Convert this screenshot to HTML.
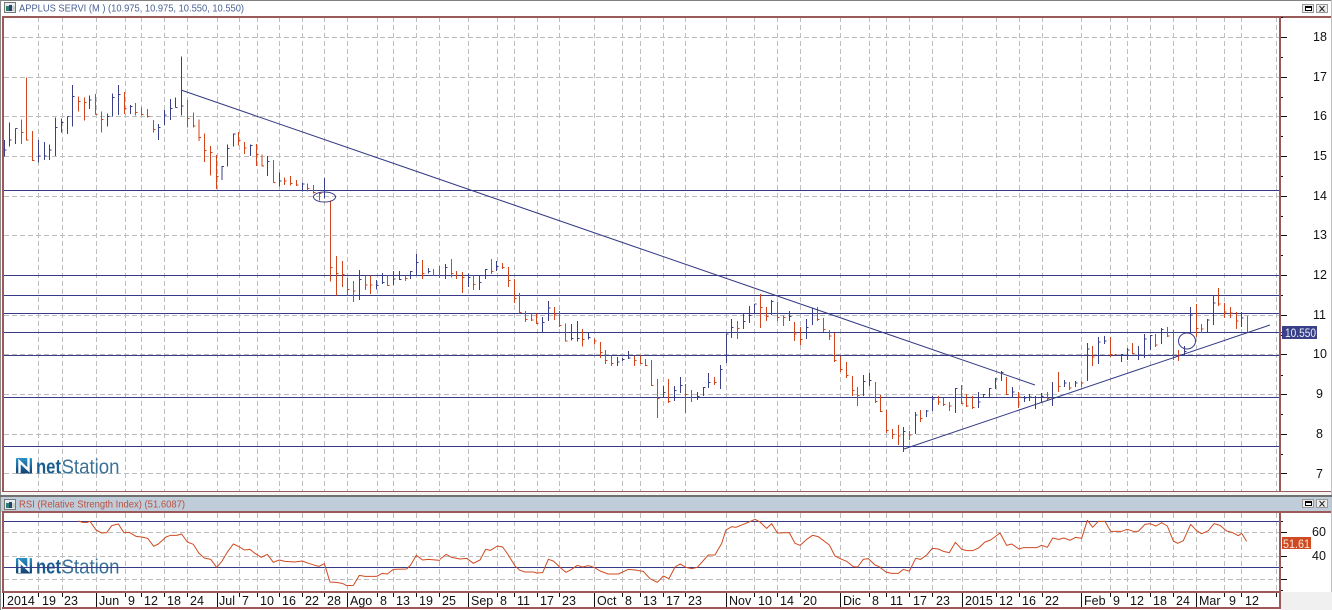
<!DOCTYPE html>
<html><head><meta charset="utf-8"><style>
html,body{margin:0;padding:0;background:#fff;width:1332px;height:610px;overflow:hidden}
svg{display:block}
text{font-family:"Liberation Sans",sans-serif}
.d text{font-size:12.5px;fill:#111}
.s text{font-size:12.5px;fill:#111}
.b{fill:none;stroke:#3a4088;stroke-width:3;shape-rendering:crispEdges}
.r{fill:none;stroke:#d2441a;stroke-width:3;shape-rendering:crispEdges}
.l{fill:none;stroke:#353b86;stroke-width:1;shape-rendering:crispEdges}
.t{fill:none;stroke:#353b86;stroke-width:1}
</style></head><body>
<svg width="1332" height="610" viewBox="0 0 1332 610" xmlns="http://www.w3.org/2000/svg">
<defs><linearGradient id="g" x1="0" y1="0" x2="0" y2="1"><stop offset="0" stop-color="#2a93c8"/><stop offset="1" stop-color="#123f70"/></linearGradient></defs>
<rect width="1332" height="610" fill="#fff"/>
<!-- window frame -->
<rect x="0" y="0" width="1332" height="1" fill="#808080"/>
<rect x="0" y="0" width="1" height="610" fill="#8a8a8a"/>
<rect x="1331" y="0" width="1" height="592" fill="#c0c0c0"/>
<!-- vertical grid -->
<g stroke="#bdbdbd" stroke-width="1" stroke-dasharray="5 3" shape-rendering="crispEdges">
<path d="M38.5 17V491M62.5 17V491M96.5 17V491M125.5 17V491M141.5 17V491M164.5 17V491M187.5 17V491M217.5 17V491M239.5 17V491M257.5 17V491M279.5 17V491M302.5 17V491M324.5 17V491M347.5 17V491M377.5 17V491M393.5 17V491M416.5 17V491M439.5 17V491M468.5 17V491M497.5 17V491M514.5 17V491M537.5 17V491M559.5 17V491M594.5 17V491M622.5 17V491M640.5 17V491M663.5 17V491M685.5 17V491M726.5 17V491M754.5 17V491M777.5 17V491M800.5 17V491M840.5 17V491M869.5 17V491M886.5 17V491M909.5 17V491M932.5 17V491M962.5 17V491M996.5 17V491M1019.5 17V491M1042.5 17V491M1081.5 17V491M1110.5 17V491M1127.5 17V491M1150.5 17V491M1173.5 17V491M1196.5 17V491M1224.5 17V491M1241.5 17V491M1276.5 17V491"/>
<path d="M38.5 513V591M62.5 513V591M96.5 513V591M125.5 513V591M141.5 513V591M164.5 513V591M187.5 513V591M217.5 513V591M239.5 513V591M257.5 513V591M279.5 513V591M302.5 513V591M324.5 513V591M347.5 513V591M377.5 513V591M393.5 513V591M416.5 513V591M439.5 513V591M468.5 513V591M497.5 513V591M514.5 513V591M537.5 513V591M559.5 513V591M594.5 513V591M622.5 513V591M640.5 513V591M663.5 513V591M685.5 513V591M726.5 513V591M754.5 513V591M777.5 513V591M800.5 513V591M840.5 513V591M869.5 513V591M886.5 513V591M909.5 513V591M932.5 513V591M962.5 513V591M996.5 513V591M1019.5 513V591M1042.5 513V591M1081.5 513V591M1110.5 513V591M1127.5 513V591M1150.5 513V591M1173.5 513V591M1196.5 513V591M1224.5 513V591M1241.5 513V591M1276.5 513V591"/>
<path d="M4 37.5H1279M4 77.5H1279M4 116.5H1279M4 156.5H1279M4 196.5H1279M4 235.5H1279M4 275.5H1279M4 315.5H1279M4 354.5H1279M4 394.5H1279M4 434.5H1279M4 473.5H1279M4 532.5H1279M4 556.5H1279M4 579.5H1279"/>
</g>
<!-- logos -->
<g>
<rect x="16" y="458" width="16" height="15.5" rx="1" fill="url(#g)"/>
<path d="M19.5 473V461.5L28.5 470V458" fill="none" stroke="#fff" stroke-width="2.4"/>
<text x="36" y="473.5" font-size="20.5" font-weight="bold" fill="#1b5d8e" textLength="25" lengthAdjust="spacingAndGlyphs">net</text>
<text x="61.5" y="473.5" font-size="20.5" fill="#3a7299" textLength="58" lengthAdjust="spacingAndGlyphs">Station</text>
</g>
<g>
<rect x="16" y="558" width="16" height="15.5" rx="1" fill="url(#g)"/>
<path d="M19.5 573V561.5L28.5 570V558" fill="none" stroke="#fff" stroke-width="2.4"/>
<text x="36" y="573.5" font-size="20.5" font-weight="bold" fill="#1b5d8e" textLength="25" lengthAdjust="spacingAndGlyphs">net</text>
<text x="61.5" y="573.5" font-size="20.5" fill="#3a7299" textLength="58" lengthAdjust="spacingAndGlyphs">Station</text>
</g>
<!-- horizontal lines -->
<path class="l" d="M3 190.5H1279M3 275.5H1279M3 295.5H1279M3 313.5H1279M3 332.5H1282M3 355.5H1279M3 397.5H1279M3 446.5H1279M3 521.5H1279M3 567.5H1279"/>
<!-- bars group 1 -->
<g transform="scale(.33333)">
<path class="b" d="M13 420V470M13 450h6M28 367V440M28 420h6M47 385V432M47 385h6M115 420V488M115 468h6M133 426V480M133 468h6M148 433V480M148 450h6M166 352V468M166 382h6M184 355V397M184 368h6M202 349V402M202 349h6M217 255V380M217 289h6M269 287V327M269 300h6M322 340V380M322 350h6M338 280V350M338 292h6M356 255V345M356 283h6M391 315V342M391 320h6M476 372V420M476 382h6M494 330V375M494 345h6M511 297V360M511 325h6M527 292V323M527 322h6M545 170V347M545 318h6M666 498V540M666 500h6M683 433V500M683 445h6M700 400V440M700 402h6M752 433V468M752 437h6M803 468V528M803 485h6M838 517V560M838 543h6M907 547V575M907 552h6M973 534V595"/>
<path class="r" d="M64 358V432M64 397h6M80 232V422M80 420h6M98 393V483M98 482h6M235 289V335M235 305h6M253 292V362M253 307h6M287 282V344M287 343h6M305 334V398M305 358h6M373 276V342M373 325h6M407 309V347M407 338h6M424 322V347M424 343h6M442 327V353M442 350h6M460 360V398M460 388h6M562 300V383M562 355h6M580 337V382M580 378h6M597 358V423M597 412h6M614 400V486M614 452h6M632 438V527M632 458h6M650 465V567M650 530h6M716 396V437M716 422h6M734 426V462M734 444h6M770 432V498M770 463h6M786 463V500M786 498h6M820 480V548M820 547h6M854 533V555M854 543h6M871 528V556M871 550h6M889 540V558M889 555h6M923 550V575M923 565h6M941 555V580M941 578h6M958 577V602M958 580h6"/>
</g>
<g transform="translate(300 170) scale(.33333)">
<path class="b" d="M178 300V390M178 328h6M229 330V358M229 347h6M247 309V342M247 338h6M280 303V345M280 327h6M298 303V330M298 328h6M331 303V327M331 305h6M349 252V318M349 277h6M385 294V310M385 305h6M436 282V327M436 293h6M505 310V351M505 322h6M538 316V360M538 337h6M556 297V327M556 298h6M589 273V303M589 290h6M727 441V487M727 457h6M745 393V453M745 414h6"/>
<path class="r" d="M91 92V335M91 292h6M109 258V376M109 310h6M127 273V351M127 313h6M143 324V377M143 358h6M160 333V396M160 363h6M196 316V360M196 345h6M212 316V372M212 345h6M263 316V348M263 346h6M316 318V333M316 325h6M367 270V327M367 310h6M400 297V318M418 288V324M454 267V323M454 310h6M469 303V327M487 306V369M487 322h6M521 315V360M521 343h6M574 267V312M574 304h6M607 279V297M607 292h6M625 291V351M625 331h6M643 327V399M643 385h6M659 369V430M659 428h6M676 423V456M676 449h6M694 432V453M694 450h6M710 431V462M710 460h6M763 411V450M763 435h6M778 423V471M778 466h6"/>
</g>
<g transform="translate(555 310) scale(.33333)">
<path class="b" d="M49 42V92M49 85h6M67 33V95M67 85h6M100 67V88M100 82h6"/>
<path class="r" d="M31 40V95M31 93h6M82 57V110M82 88h6M118 85V104M118 93h6"/>
</g>
<g transform="translate(600 280) scale(.33333)">
<path class="b" d="M52 231V258M52 246h6M68 234V243M68 238h6M86 213V237M86 234h6M190 318V351M190 337h6M223 318V363M223 331h6M241 291V339M241 316h6M292 336V360M292 349h6M310 321V348M310 322h6M326 279V324M326 307h6M361 255V327M361 268h6M380 160V249M380 162h6M394 117V174M394 142h6M431 100V147M431 124h6M448 78V129M448 106h6M464 72V100M464 72h6M515 60V105M515 64h6M568 93V123M568 109h6M619 117V177M619 142h6M637 82V135M637 85h6M790 285V348M790 304h6M808 279V318M808 301h6"/>
<path class="r" d="M1 186V234M1 217h6M16 210V252M16 241h6M34 227V258M34 250h6M103 228V258M103 241h6M121 226V252M121 250h6M137 237V258M137 256h6M155 240V318M155 316h6M172 297V414M172 355h6M205 297V369M205 364h6M256 312V399M256 343h6M274 330V366M344 291V315M344 307h6M412 123V177M412 145h6M481 42V144M481 82h6M499 81V123M499 109h6M532 66V123M532 112h6M550 106V138M550 112h6M584 126V183M584 162h6M601 141V195M601 178h6M653 81V123M653 118h6M670 114V156M670 148h6M688 150V180M688 168h6M703 159V246M703 241h6M721 228V276M721 268h6M739 246V294M739 286h6M757 288V348M757 331h6M772 321V378M772 346h6M826 306V369M826 364h6M842 345V396M842 394h6"/>
</g>
<g transform="translate(880 280) scale(.33333)">
<path class="b" d="M71 441V516M71 455h6M107 396V462M107 405h6M140 390V411M140 393h6M157 348V393M157 357h6M227 324V399M227 325h6M296 336V384M296 366h6M311 342V351M311 343h6M329 324V351M329 325h6M347 294V327M347 297h6M364 273V303M364 278h6M397 321V351M397 336h6M433 348V366M433 354h6M449 342V363M449 351h6M467 348V387M467 352h6M485 339V366M485 350h6M518 306V378M518 354h6M554 300V321M554 309h6M587 303V321M587 309h6M622 189V303M622 207h6M656 171V252M656 186h6M674 168V192M674 183h6M725 222V246M725 223h6M743 204V240M743 210h6"/>
<path class="r" d="M19 390V459M19 451h6M37 447V477M37 463h6M55 435V495M55 468h6M88 453V480M88 465h6M122 390V426M122 415h6M175 348V375M175 366h6M191 354V378M191 373h6M209 366V393M209 378h6M245 315V372M245 370h6M260 342V381M260 378h6M278 348V387M278 382h6M380 291V345M380 343h6M415 336V384M415 351h6M502 336V360M502 355h6M536 276V336M536 319h6M569 306V330M569 324h6M605 304V321M605 309h6M638 198V258M638 231h6M691 171V231M691 224h6M704 224h6"/>
</g>
<g transform="translate(1130 270) scale(.33333)">
<path class="b" d="M26 228V270M26 255h6M44 192V264M44 207h6M62 195V240M62 197h6M94 174V222M94 178h6M163 228V258M163 244h6M181 111V190M181 135h6M233 147V189M233 150h6M250 76V165M250 99h6M334 126V171M334 144h6"/>
<path class="r" d="M8 219V252M8 250h6M76 192V231M76 225h6M112 171V201M112 198h6M130 180V270M130 263h6M146 240V273M146 255h6M199 102V201M199 175h6M215 162V189M215 177h6M266 54V108M266 102h6M283 99V144M283 126h6M301 111V144M301 129h6M319 126V177M319 153h6M352 138V186"/>
</g>
<!-- trend lines & ellipses -->
<path class="t" d="M181 90L1035 385M904 449L1270 325"/>
<ellipse cx="324.5" cy="197" rx="11" ry="5" fill="none" stroke="#353b86" stroke-width="1"/>
<ellipse cx="1187" cy="341" rx="8.5" ry="8" fill="none" stroke="#353b86" stroke-width="1"/>
<!-- RSI line -->
<g fill="none" stroke="#cf4a20" stroke-width="3" stroke-linejoin="round">
<path transform="translate(0 510) scale(.33333)" d="M235 33L247 37L262 37L270 34L288 60L305 69L320 68L335 47L355 42L372 68L388 67L408 79L425 81L443 85L461 109L475 102L498 81L512 76L530 76L545 72L562 96L580 103L597 130L613 144L632 148L650 172L665 155L683 125L700 102L717 110L733 120L750 118L765 130L784 142L802 133L820 157L838 150L855 154L883 156L907 153L925 160L945 166L957 169L973 161L990 216L1008 217L1027 220L1040 227L1060 226L1078 196L1095 199L1130 199L1147 190L1162 192L1180 178L1220 177L1232 165L1249 136L1268 150L1285 148L1320 151"/>
<path transform="translate(440 510) scale(.33333)" d="M0 148L18 133L35 142L60 147L80 145L100 160L120 150L137 118L152 121L172 108L188 111L205 135L225 168L240 181L255 186L280 186L290 189L308 188L325 148L340 153L360 172L378 187L395 178L412 166L428 171L445 167L462 172L480 183L505 192L535 192L565 178L585 180L610 184L630 206L652 217L670 198L687 206L705 171L720 162L738 172L755 176L772 172L805 135L825 135L845 100L858 60L875 50L888 52L925 37L945 28L960 36L980 55L995 41L1012 69L1048 68L1065 100L1080 106L1100 88L1118 76L1135 80L1168 105L1185 138L1205 148L1220 154L1240 170L1253 171L1270 148L1285 146L1305 165L1322 172"/>
<path transform="translate(880 510) scale(.33333)" d="M0 172L18 186L35 190L55 190L70 178L88 184L107 145L122 148L140 135L157 115L175 117L190 124L208 128L226 97L245 118L262 122L278 122L297 113L315 96L332 90L360 69L380 106L395 102L417 117L430 113L470 113L485 106L502 112L518 84L536 88L552 84L570 91L587 82L605 85L622 31L638 52L655 34L675 34L692 64L725 64L742 58L760 64L775 64L795 43L810 41L828 48L845 38L862 48L880 93L893 100L910 92L932 43L950 62L965 71L985 62L1002 41L1020 46L1040 63L1058 68L1075 77L1085 70L1100 94"/>
</g>
<!-- panel chrome -->
<rect x="1" y="1" width="1330" height="15" fill="#fff"/>
<rect x="1" y="492" width="1330" height="4" fill="#f4f4f4"/>
<rect x="0" y="495" width="1332" height="2" fill="#707070"/>
<rect x="1" y="497" width="1330" height="15" fill="#bfccda"/>
<rect x="1281" y="592" width="51" height="18" fill="#f0f0f0"/>
<g fill="#9b5a5a" shape-rendering="crispEdges">
<rect x="2" y="16" width="1329" height="2"/>
<rect x="2" y="491" width="1329" height="1"/>
<rect x="2" y="511" width="1329" height="2"/>
<rect x="2" y="591" width="1279" height="2"/>
<rect x="2" y="607" width="1279" height="2"/>
<rect x="2" y="16" width="2" height="476"/>
<rect x="2" y="511" width="2" height="82"/>
<rect x="1279" y="16" width="2" height="476"/>
<rect x="1279" y="511" width="2" height="98"/>
</g>
<rect x="3" y="593" width="1" height="14" fill="#000"/>
<!-- right axis ticks -->
<path stroke="#111" stroke-width="1" shape-rendering="crispEdges" fill="none" d="M1281 37.5h6M1281 77.5h6M1281 116.5h6M1281 156.5h6M1281 196.5h6M1281 235.5h6M1281 275.5h6M1281 315.5h6M1281 354.5h6M1281 394.5h6M1281 434.5h6M1281 473.5h6M1281 17.5h2M1281 57.5h2M1281 97.5h2M1281 136.5h2M1281 176.5h2M1281 216.5h2M1281 255.5h2M1281 295.5h2M1281 335.5h2M1281 375.5h2M1281 414.5h2M1281 454.5h2M1281 521.5h2M1281 532.5h6M1281 556.5h6M1281 567.5h2M1281 579.5h6M1281 590.5h2"/>
<g class="s">
<text x="1313" y="41">18</text><text x="1313" y="81">17</text><text x="1313" y="120">16</text><text x="1313" y="160">15</text><text x="1313" y="200">14</text><text x="1313" y="239">13</text><text x="1313" y="279">12</text><text x="1313" y="319">11</text><text x="1313" y="358">10</text><text x="1316" y="398">9</text><text x="1316" y="438">8</text><text x="1316" y="478">7</text>
<text x="1312" y="536">60</text><text x="1312" y="560">40</text>
</g>
<rect x="1282" y="326" width="35" height="13" fill="#3a4088"/>
<text x="1285" y="337" font-size="12" fill="#e8eef8" textLength="31" lengthAdjust="spacingAndGlyphs">10.550</text>
<rect x="1282" y="537" width="29" height="12" fill="#cf4a20"/>
<text x="1283" y="548" font-size="12" fill="#fde8e0" textLength="27" lengthAdjust="spacingAndGlyphs">51.61</text>
<!-- date axis ticks -->
<path stroke="#111" stroke-width="1" shape-rendering="crispEdges" fill="none" d="M96.5 593V607M217.5 593V607M347.5 593V607M468.5 593V607M594.5 593V607M726.5 593V607M840.5 593V607M962.5 593V607M1081.5 593V607M1196.5 593V607M38.5 593v4M62.5 593v4M125.5 593v4M141.5 593v4M164.5 593v4M187.5 593v4M239.5 593v4M257.5 593v4M279.5 593v4M302.5 593v4M324.5 593v4M377.5 593v4M393.5 593v4M416.5 593v4M439.5 593v4M497.5 593v4M514.5 593v4M537.5 593v4M559.5 593v4M622.5 593v4M640.5 593v4M663.5 593v4M685.5 593v4M754.5 593v4M777.5 593v4M800.5 593v4M869.5 593v4M886.5 593v4M909.5 593v4M932.5 593v4M996.5 593v4M1019.5 593v4M1042.5 593v4M1110.5 593v4M1127.5 593v4M1150.5 593v4M1173.5 593v4M1224.5 593v4M1241.5 593v4M1276.5 593v4"/>
<g class="d">
<text x="7" y="605">2014</text><text x="42" y="605">19</text><text x="64" y="605">23</text><text x="99" y="605">Jun</text><text x="128" y="605">9</text><text x="144" y="605">12</text><text x="167" y="605">18</text><text x="190" y="605">24</text><text x="219" y="605">Jul</text><text x="242" y="605">7</text><text x="260" y="605">10</text><text x="282" y="605">16</text><text x="305" y="605">22</text><text x="327" y="605">28</text><text x="350" y="605">Ago</text><text x="380" y="605">8</text><text x="396" y="605">13</text><text x="419" y="605">19</text><text x="442" y="605">25</text><text x="471" y="605">Sep</text><text x="500" y="605">8</text><text x="517" y="605">11</text><text x="540" y="605">17</text><text x="562" y="605">23</text><text x="597" y="605">Oct</text><text x="625" y="605">8</text><text x="643" y="605">13</text><text x="666" y="605">17</text><text x="688" y="605">23</text><text x="729" y="605">Nov</text><text x="758" y="605">10</text><text x="780" y="605">14</text><text x="803" y="605">20</text><text x="843" y="605">Dic</text><text x="872" y="605">8</text><text x="890" y="605">11</text><text x="913" y="605">17</text><text x="936" y="605">23</text><text x="965" y="605">2015</text><text x="999" y="605">12</text><text x="1022" y="605">16</text><text x="1045" y="605">22</text><text x="1084" y="605">Feb</text><text x="1113" y="605">9</text><text x="1130" y="605">12</text><text x="1153" y="605">18</text><text x="1176" y="605">24</text><text x="1199" y="605">Mar</text><text x="1229" y="605">9</text><text x="1245" y="605">12</text>
</g>
<!-- titles -->
<g shape-rendering="crispEdges">
<rect x="4.5" y="2.5" width="11" height="10" fill="#e8eef0" stroke="#777"/>
<rect x="6" y="6" width="3" height="5" fill="#2f7f6f"/><rect x="9" y="5" width="3" height="6" fill="#2b3f7a"/><rect x="12" y="6" width="3" height="5" fill="#c9d4c9"/>
<rect x="4.5" y="499.5" width="11" height="10" fill="#e8eef0" stroke="#777"/>
<rect x="6" y="503" width="3" height="5" fill="#2f7f6f"/><rect x="9" y="502" width="3" height="6" fill="#2b3f7a"/><rect x="12" y="503" width="3" height="5" fill="#c9d4c9"/>
</g>
<text x="19" y="11.5" font-size="10.5" fill="#4a6296" textLength="225" lengthAdjust="spacingAndGlyphs">APPLUS SERVI (M ) (10.975, 10.975, 10.550, 10.550)</text>
<text x="19" y="507.5" font-size="10.5" fill="#bb5040" textLength="166" lengthAdjust="spacingAndGlyphs">RSI (Relative Strength Index) (51.6087)</text>
<!-- window buttons -->
<g shape-rendering="crispEdges">
<rect x="1302.5" y="4.5" width="11" height="8" fill="#ececec" stroke="#999"/>
<rect x="1305.5" y="6.5" width="6" height="4" fill="#fff" stroke="#000"/><rect x="1305" y="6" width="7" height="2" fill="#000"/>
<rect x="1316.5" y="4.5" width="11" height="8" fill="#ececec" stroke="#999"/>
<rect x="1302.5" y="499.5" width="11" height="8" fill="#ececec" stroke="#999"/>
<rect x="1305.5" y="501.5" width="6" height="4" fill="#fff" stroke="#000"/><rect x="1305" y="501" width="7" height="2" fill="#000"/>
<rect x="1316.5" y="499.5" width="11" height="8" fill="#ececec" stroke="#999"/>
</g>
<path d="M1319.5 6L1324.5 11.5M1324.5 6L1319.5 11.5M1319.5 501L1324.5 506.5M1324.5 501L1319.5 506.5" stroke="#222" stroke-width="1" fill="none"/>
</svg>
</body></html>
